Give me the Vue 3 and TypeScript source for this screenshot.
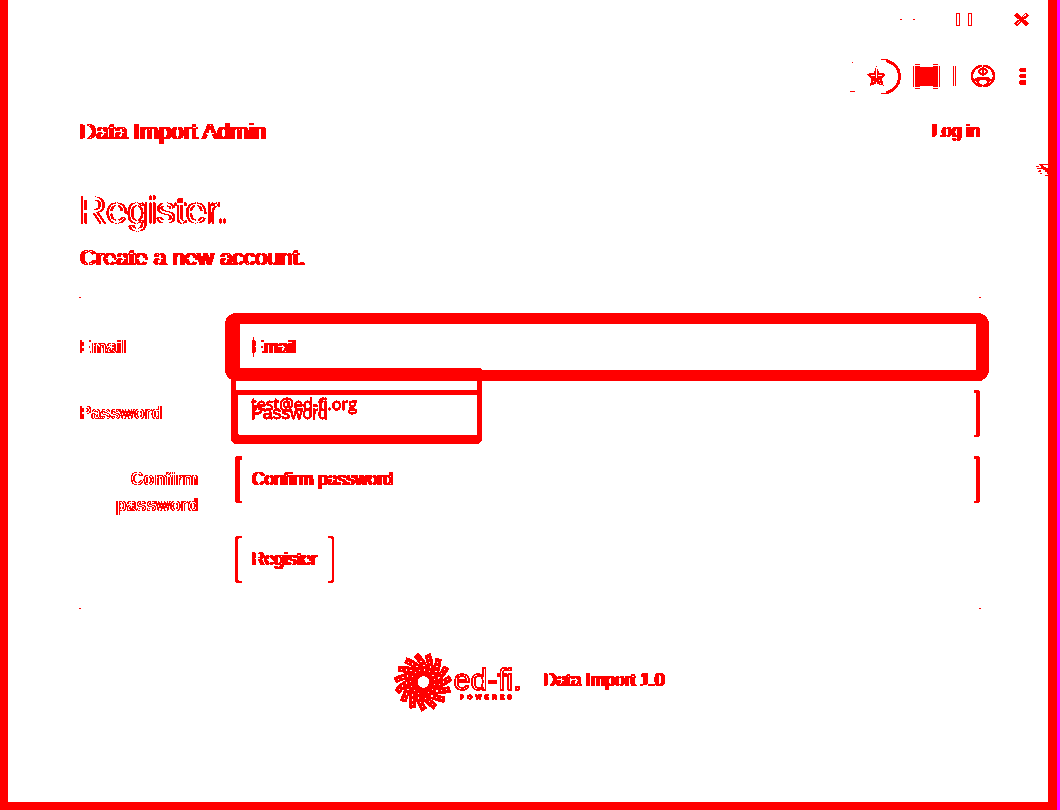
<script setup lang="ts">
interface Field {
  id: string
  label: string
  kind: 'focus' | 'covered' | 'plain'
}

const fields: Field[] = [
  { id: 'email', label: 'Email', kind: 'focus' },
  { id: 'password', label: 'Password', kind: 'covered' },
  { id: 'confirm', label: 'Confirm password', kind: 'plain' },
]

const edgeFilters = [
  { id: 'edge-thin', dx: 1.4, mid: 0 },
  { id: 'edge-text', dx: 2, mid: 1 },
  { id: 'edge-title', dx: 2, mid: 0 },
]

const arms = Array.from({ length: 15 }, (_, i) => i * 24 + 6)
</script>

<template>
  <div class="window">
    <svg class="defs" width="0" height="0" aria-hidden="true">
      <filter id="crisp" x="0" y="0" width="100%" height="100%" color-interpolation-filters="sRGB">
        <feComponentTransfer>
          <feFuncG type="discrete" tableValues="0 0 0 0 0 1" />
          <feFuncB type="discrete" tableValues="0 0 0 0 0 1" />
        </feComponentTransfer>
      </filter>
      <filter
        v-for="e in edgeFilters"
        :id="e.id"
        :key="e.id"
        x="-5%"
        y="-20%"
        width="110%"
        height="140%"
        color-interpolation-filters="sRGB"
      >
        <feOffset in="SourceGraphic" :dx="e.dx" dy="0" result="moved" />
        <feOffset in="SourceGraphic" :dx="e.mid" dy="0" result="middle" />
        <feComposite in="SourceGraphic" in2="moved" operator="arithmetic" k1="0" k2="1" k3="-1" k4="0" result="lead" />
        <feComposite in="moved" in2="SourceGraphic" operator="arithmetic" k1="0" k2="1" k3="-1" k4="0" result="trail" />
        <feComposite in="SourceGraphic" in2="middle" operator="arithmetic" k1="0" k2="1" k3="-1" k4="0" result="inner-lead" />
        <feComposite in="middle" in2="SourceGraphic" operator="arithmetic" k1="0" k2="1" k3="-1" k4="0" result="inner-trail" />
        <feMerge>
          <feMergeNode in="lead" />
          <feMergeNode in="trail" />
          <feMergeNode in="inner-lead" />
          <feMergeNode in="inner-trail" />
        </feMerge>
      </filter>
    </svg>
    <div class="view">
      <header class="chrome">
        <svg width="220" height="100" viewBox="840 0 220 100" shape-rendering="crispEdges" fill="none" stroke="#f00">
          <path d="M900 19.5h2M913 19.5h2" />
          <path d="M956.5 13.5h3v12h-3zM968.5 13.5h3v12h-3z" />
          <path d="M1015.5 14l12 11M1027.5 14l-12 11" stroke-width="4" />
          <path d="M1023 17l3-2.5M1016.5 24.5l3.500-3.500" stroke="#fff" />
          <path d="M852 62.5h1M850 91.5h5" />
          <path d="M881 59.5h7M881 93.5h7" />
          <path d="M886 60.5c8 2 13.5 8 13.5 16s-5.5 14-13.5 16.5" stroke-width="3" />
          <path d="M876.5 67.500l2.500 5.700 6 1-3.500 4.300 1.500 6.500-6.500-1.600-6 1.600 1.400-6.500-4-4.300 6-1z" fill="#f00" />
          <path d="M876.5 67v11M871 75.5h4M878 75.5h4M873 81.5h1M879 80.5h1M880 83.5h1M876.5 82v2" stroke="#fff" />
          <path d="M913.5 66v21M939.5 66v21M915 64.5h5M933 64.5h5M915 88.5h5M933 88.5h5" />
          <path d="M915 66h5v1h13v-1h5v21h-5v-1h-13v1h-5z" fill="#f00" stroke="none" />
          <path d="M953.5 66v20M955.5 66v20" />
          <ellipse cx="983" cy="76" rx="11" ry="10.3" stroke-width="2.4" />
          <ellipse cx="983" cy="71.5" rx="3.8" ry="3" stroke-width="2.2" />
          <path d="M983 69v4" stroke-width="1.4" />
          <path d="M975 79.500q2-2.500 5.500-2.500h5q3.500 0 5.500 2.500l-3 3q-1-3.500-5-3.500t-5 3.500z" fill="#f00" />
          <path d="M978.5 83l4.5 2.5 4.500-2.500" />
          <path d="M982.500 64v2.500M982.500 85.500v2.500" stroke="#fff" />
          <path d="M1020 68h6v4h-6v-1h-1v-2h1zM1020 74h6v4h-6v-1h-1v-2h1zM1020 80h5l1 1v3l-1 1h-5l-1-1v-3z" fill="#f00" stroke="none" />
        </svg>
      </header>

      <nav class="navbar">
        <a class="brand">Data Import Admin</a>
        <a class="login">Log in</a>
      </nav>

      <main class="content">
        <h1>Register.</h1>
        <h2>Create a new account.</h2>
        <div class="rule"><i></i><i></i></div>

        <form class="form">
          <div v-for="f in fields" :key="f.id" class="row">
            <label :class="{ right: f.kind === 'plain' }">{{ f.label }}</label>
            <div class="control" :class="f.kind">
              <span class="placeholder">{{ f.label }}</span>
              <span v-if="f.kind === 'focus'" class="caret"></span>
            </div>
            <div v-if="f.kind === 'covered'" class="suggest">
              <span class="edge"></span>
              <span class="option">test@ed-fi.org</span>
            </div>
          </div>
          <div class="submit"><span>Register</span></div>
        </form>
        <div class="rule end"><i></i><i></i></div>
      </main>

      <footer class="footer">
        <svg class="logo" width="135" height="64" viewBox="390 650 135 64">
          <g v-for="a in arms" :key="a" :transform="`translate(423 682) rotate(${a})`">
            <path d="M6 0Q13 3 18 0T27 -7" fill="none" stroke="#f00" stroke-width="6" />
            <circle cx="12" cy="1.6" r="1" fill="#fff" />
            <circle cx="16.500" cy=".8" r="1.2" fill="#fff" />
            <circle cx="20.500" cy="-2" r="1.1" fill="#fff" />
            <circle cx="24" cy="-5" r=".9" fill="#fff" />
          </g>
          <circle cx="423.5" cy="682" r="6" fill="#fff" />
          <text class="wordmark" x="453.5" y="689.5" textLength="68" lengthAdjust="spacingAndGlyphs">ed-fi.</text>
          <text class="powered" x="460" y="699" textLength="52">POWERED</text>
        </svg>
        <span class="version">Data Import 1.0</span>
      </footer>

      <svg class="cursor" width="12" height="12" viewBox="1036 164 12 12" shape-rendering="crispEdges" fill="none" stroke="#f00">
        <path d="M1039 164.5h9M1036 166.5h3M1040 165.5h3M1037 168.5h4M1039 170.5h2M1038 171.5h3M1040 173.5h2M1045 175.5h3" />
        <path d="M1041 166h3v1h2v1h2v6h-1v-2h-2v-2h-2v-1h-2z" fill="#f00" stroke="none" />
      </svg>
    </div>
  </div>
</template>

<style>
body {
  margin: 0;
  background: #fff;
}
</style>

<style scoped>
*,
*::before,
*::after {
  box-sizing: border-box;
}
.window {
  width: 1060px;
  height: 810px;
  border-right: 3px solid #f0f;
  background: #fff;
  overflow: hidden;
}
.defs {
  position: absolute;
}
.view {
  position: relative;
  width: 1057px;
  height: 810px;
  background: #fff;
  border: solid #f00;
  border-width: 0 9px 8px 8px;
  color: #f00;
  font-family: "Liberation Sans", Arial, sans-serif;
  font-size: 17.5px;
  filter: url(#crisp);
}
.chrome {
  height: 100px;
  display: flex;
  padding-left: 832px;
}
.chrome svg {
  flex: none;
}
.navbar {
  height: 62px;
  padding: 0 69px 0 71px;
  display: flex;
  align-items: center;
  justify-content: space-between;
  line-height: 24px;
}
.brand,
.login,
h2,
.placeholder,
.submit span,
.version {
  display: inline-block;
  filter: url(#edge-text);
}
.brand {
  padding-top: 2px;
  font-size: 22.5px;
}
.content {
  padding: 0 67px 0 71px;
}
h1 {
  width: 160px;
  margin: 24px 0 0 -1px;
  height: 48px;
  line-height: 48px;
  font-size: 37.7px;
  font-weight: 400;
  -webkit-text-stroke: 0.4px #f00;
  filter: url(#edge-title);
}
h2 {
  margin: 11px 0 0;
  height: 25px;
  line-height: 25px;
  font-size: 22.5px;
  font-weight: 400;
  vertical-align: top;
}
.rule {
  height: 1px;
  margin-top: 27px;
  display: flex;
  justify-content: space-between;
}
.rule i {
  width: 2px;
  background: #f00;
}
.rule.end {
  margin-top: 0;
}
.form {
  height: 310px;
  padding-top: 26px;
}
.row {
  position: relative;
  height: 47px;
  margin-bottom: 19px;
  display: grid;
  grid-template-columns: 156px 745px;
}
label {
  width: 121px;
  padding-top: 10px;
  font-weight: 700;
  line-height: 26px;
  filter: url(#edge-thin);
}
.right {
  width: 119px;
  text-align: right;
  letter-spacing: 0.1px;
}
.control {
  position: relative;
  height: 47px;
  padding-left: 16px;
  line-height: 46px;
}
.placeholder {
  height: 47px;
}
.covered .placeholder {
  filter: none;
  -webkit-text-stroke: 0.3px #f00;
}
.control::before,
.control::after,
.submit::before,
.submit::after {
  content: "";
  position: absolute;
  top: 0;
  bottom: 0;
  width: 7px;
  border: solid #f00;
}
.control::before {
  left: 0;
  border-width: 4px 0 2px 5px;
  border-radius: 4px 0 0 4px;
}
.control::after {
  right: 0;
  width: 6px;
  border-width: 3px 4px 2px 0;
  border-radius: 0 4px 4px 0;
}
.focus::before {
  inset: -11px -9px -10px -10px;
  width: auto;
  border-width: 11px 13px 11px 15px;
  border-radius: 12px;
}
.focus::after {
  display: none;
}
.covered::before {
  width: 4px;
  border-width: 1px 0 1px 3px;
}
.caret {
  position: absolute;
  left: 18px;
  top: 13px;
  width: 1px;
  height: 20px;
  background: #f00;
}
.suggest {
  position: absolute;
  z-index: 1;
  left: 152px;
  top: -22px;
  width: 251px;
  height: 76px;
  border: solid #f00;
  border-width: 13px 5px 9px 5px;
  border-radius: 4px 4px 6px 6px;
}
.edge {
  display: block;
  height: 5px;
  margin-top: 9px;
  background: #f00;
}
.option {
  display: block;
  margin: -1px 0 0 15px;
  line-height: 20px;
  font-family: "Open Sans", sans-serif;
  font-size: 16.2px;
  -webkit-text-stroke: 0.6px #f00;
  white-space: nowrap;
}
.submit {
  position: relative;
  width: 99px;
  height: 47px;
  margin: 33px 0 0 156px;
  padding-left: 16px;
  line-height: 46px;
}
.submit span {
  height: 47px;
}
.submit::before {
  left: 0;
  border-width: 2px 0 2px 3px;
  border-radius: 4px 0 0 4px;
}
.submit::after {
  right: 0;
  width: 6px;
  border-width: 2px 2px 2px 0;
  border-radius: 0 4px 4px 0;
}
.footer {
  height: 64px;
  margin-top: 41px;
  padding-left: 382px;
  display: flex;
  align-items: center;
}
.version {
  margin: -3px 0 0 18px;
}
.wordmark {
  font-size: 29px;
  fill: #fff;
  stroke: #f00;
  stroke-width: 1.1px;
}
.powered {
  font-size: 6px;
  font-weight: 700;
  fill: #f00;
  stroke: #f00;
  stroke-width: 0.8px;
}
.cursor {
  position: absolute;
  left: 1028px;
  top: 164px;
}
</style>
